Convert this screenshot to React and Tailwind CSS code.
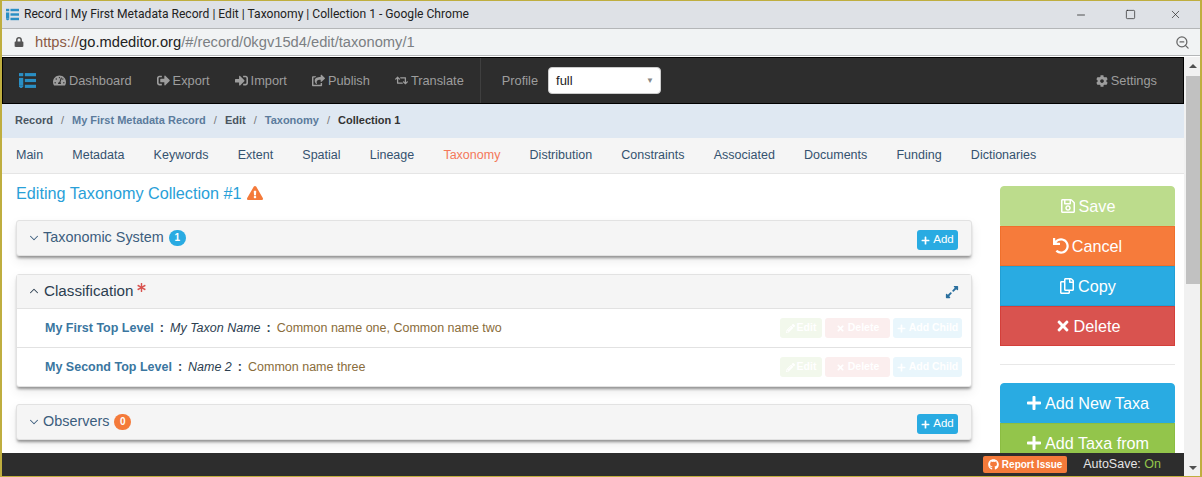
import React from 'react';
import {
    FaTachometerAlt, FaSignOutAlt, FaSignInAlt, FaShareSquare, FaRetweet, FaCog, FaRegSave, FaUndo,
    FaRegCopy, FaTimes, FaPlus, FaPencilAlt, FaExpandAlt, FaExclamationTriangle, FaGithub, FaAsterisk, FaLock,
} from 'react-icons/fa';
import { ChevronDown, ChevronUp, ZoomOut, Minus, Square, X } from 'lucide-react';

const navItems = [
    { label: 'Dashboard', icon: FaTachometerAlt },
    { label: 'Export', icon: FaSignOutAlt },
    { label: 'Import', icon: FaSignInAlt },
    { label: 'Publish', icon: FaShareSquare },
    { label: 'Translate', icon: FaRetweet },
];

const tabs = ['Main', 'Metadata', 'Keywords', 'Extent', 'Spatial', 'Lineage', 'Taxonomy', 'Distribution', 'Constraints', 'Associated', 'Documents', 'Funding', 'Dictionaries'];

const Logo = ({ className }) => (
    <svg viewBox="0 0 16 16" className={className} fill="currentColor">
        <rect x="0" y="1" width="4" height="3" />
        <rect x="0" y="5.5" width="4" height="7" />
        <path d="M0 12.5h4v1.2L2.7 15H1.3L0 13.7z" />
        <rect x="5.5" y="1" width="10.5" height="3" />
        <rect x="5.5" y="6.5" width="10.5" height="3" />
        <rect x="5.5" y="12" width="10.5" height="3" />
    </svg>
);

const AddButton = () => (
    <button className="mt-[4px] flex h-[20px] w-[41px] items-center justify-center gap-[3px] rounded-[3px] bg-[#29abe2] text-[11.5px] text-white">
        <FaPlus size={9} />Add
    </button>
);

const Panel = ({ title, badge, badgeColor }) => (
    <div className="flex h-[36px] items-center justify-between rounded-[3px] border border-[#e2e2e2] bg-[#f5f5f5] pl-[10px] pr-[13px] shadow-[0_3px_3px_-1px_rgba(0,0,0,0.4),0_5px_12px_rgba(0,0,0,0.08)]">
        <div className="flex items-center text-[14.4px] text-[#3c5d7d]">
            <ChevronDown size={14} strokeWidth={1.75} className="mr-[2px]" />
            {title}
            <span className={`ml-[5px] flex h-[16px] min-w-[17px] items-center justify-center rounded-full text-[10px] font-bold text-white ${badgeColor}`}>{badge}</span>
        </div>
        <AddButton />
    </div>
);

const TaxonRow = ({ level, name, common, last }) => (
    <div className={`flex items-center justify-between pl-[28px] pr-[9px] ${last ? 'h-[38px]' : 'h-[39px] border-b border-[#e2e2e2]'}`}>
        <div className="text-[12.5px] text-[#8a6d3b]">
            <span className="font-bold text-[#3a76a0]">{level}</span>
            <b className="mx-[6px] text-[#2c3e50]">:</b>
            <i className="text-[#2c3e50]">{name}</i>
            <b className="mx-[6px] text-[#2c3e50]">:</b>
            {common}
        </div>
        <div className="flex items-center gap-[3px] text-[10.5px] font-bold text-white">
            <span className="flex h-[20px] w-[42px] items-center justify-center gap-[2px] rounded-[3px] bg-[#f2f8ec]"><FaPencilAlt size={9} />Edit</span>
            <span className="flex h-[20px] w-[65px] items-center justify-center gap-[3px] rounded-[3px] bg-[#fbeeee]"><FaTimes size={9} />Delete</span>
            <span className="flex h-[20px] w-[69px] items-center justify-center gap-[3px] rounded-[3px] bg-[#e9f6fc]"><FaPlus size={9} />Add Child</span>
        </div>
    </div>
);

const SideButton = ({ icon: Icon, label, color, rounded }) => (
    <button className={`flex h-[40px] w-full shrink-0 items-center justify-center gap-[3px] border text-[16.2px] text-white ${color} ${rounded ? 'rounded-t-[4px]' : ''}`}>
        <Icon size={16} />{label}
    </button>
);

export default function App() {
    return (
        <div className="flex h-[477px] w-[1202px] flex-col overflow-hidden border-y border-r-2 border-l-2 border-[#bfae3f] bg-white font-['Liberation_Sans',sans-serif]">
            {/* Chrome window */}
            <div className="flex h-[28px] shrink-0 items-center justify-between border-b border-[#b4b6b8] bg-[#dee1e6] pl-[4px] pr-[18px]">
                <div className="flex items-center gap-[5px] font-['Roboto',sans-serif] text-[12.1px] text-[#222]">
                    <Logo className="h-[13px] w-[13px] text-[#2a8fc4]" />
                    Record | My First Metadata Record | Edit | Taxonomy | Collection 1 - Google Chrome
                </div>
                <div className="flex items-center text-[#222]">
                    <Minus size={12} strokeWidth={1.5} />
                    <Square size={11} strokeWidth={1.5} className="ml-[38px]" />
                    <X size={13} strokeWidth={1.25} className="ml-[33px]" />
                </div>
            </div>
            <div className="flex h-[27px] shrink-0 items-center justify-between border-b border-[#b4b6b8] bg-[#f1f3f4] pl-[12px] pr-[10px]">
                <div className="flex items-center text-[14.7px] text-[#7b7f83]">
                    <FaLock size={10} className="mr-[11px] text-[#555]" />
                    <span className="text-[#8a5a44]">https://</span>
                    <span className="text-[#222]">go.mdeditor.org</span>
                    /#/record/0kgv15d4/edit/taxonomy/1
                </div>
                <ZoomOut size={15} className="text-[#666]" />
            </div>

            <div className="flex min-h-0 flex-1 pt-px">
                <div className="flex min-w-0 flex-1 flex-col">
                    {/* Top nav */}
                    <div className="flex h-[47px] shrink-0 items-center border border-black bg-[#2d2d2d] text-[12.8px] text-[#9d9d9d]">
                        <Logo className="ml-[16px] mr-[17px] h-[17px] w-[17px] text-[#2a8fc4]" />
                        {navItems.map(({ label, icon: Icon }) => (
                            <span key={label} className="mr-[25px] flex items-center gap-[3px]"><Icon size={13} />{label}</span>
                        ))}
                        <div className="ml-[-9px] mr-[21px] h-full border-l border-[#3f3f3f]" />
                        <span className="mr-[10px]">Profile</span>
                        <div className="flex h-[27px] w-[113px] items-center justify-between rounded-[4px] border border-[#ccc] bg-white pl-[7px] pr-[6px] text-[13px] text-[#222]">
                            full
                            <span className="text-[8px] text-[#888]">▼</span>
                        </div>
                        <span className="ml-auto mr-[26px] flex items-center gap-[3px]"><FaCog size={12} />Settings</span>
                    </div>

                    <div className="flex h-[34px] shrink-0 items-center bg-[#dfe8f2] pb-[2px] pl-[13px] text-[11px] font-bold text-[#4a5560]">
                        Record<span className="mx-[8px] font-normal text-[#777]">/</span>
                        <span className="text-[#5b7b9c]">My First Metadata Record</span><span className="mx-[8px] font-normal text-[#777]">/</span>
                        Edit<span className="mx-[8px] font-normal text-[#777]">/</span>
                        <span className="text-[#5b7b9c]">Taxonomy</span><span className="mx-[8px] font-normal text-[#777]">/</span>
                        <span className="text-[#333]">Collection 1</span>
                    </div>

                    <div className="flex h-[36px] shrink-0 items-center gap-[29.2px] border-b border-[#e5e5e5] bg-[#f5f5f5] pl-[14px] text-[12.5px] text-[#34526f]">
                        {tabs.map(t => (
                            <span key={t} className={t === 'Taxonomy' ? 'text-[#f4785a]' : ''}>{t}</span>
                        ))}
                    </div>

                    <div className="flex min-h-0 flex-1 overflow-hidden">
                        <div className="w-[998px] shrink-0 pl-[14px] pr-[28px]">
                            <h1 className="mt-[8px] flex h-[22px] items-center gap-[5px] text-[16.2px] font-normal text-[#29a0d8]">
                                Editing Taxonomy Collection #1
                                <FaExclamationTriangle size={16} className="text-[#f47a3a]" />
                            </h1>
                            <div className="mt-[16px]">
                                <Panel title="Taxonomic System" badge="1" badgeColor="bg-[#29abe2]" />
                            </div>
                            <div className="mt-[18px] rounded-[3px] border border-[#e2e2e2] bg-white shadow-[0_3px_3px_-1px_rgba(0,0,0,0.4),0_5px_12px_rgba(0,0,0,0.08)]">
                                <div className="flex h-[34px] items-center justify-between border-b border-[#e2e2e2] bg-[#f5f5f5] pl-[10px] pr-[12px]">
                                    <div className="flex items-center text-[15.2px] text-[#2c3e50]">
                                        <ChevronUp size={14} strokeWidth={1.75} className="mr-[3px]" />
                                        Classification
                                        <FaAsterisk size={9} className="mb-[7px] ml-[4px] text-[#d9534f]" />
                                    </div>
                                    <FaExpandAlt size={14} className="text-[#2a6f9e]" />
                                </div>
                                <TaxonRow level="My First Top Level" name="My Taxon Name" common="Common name one, Common name two" />
                                <TaxonRow level="My Second Top Level" name="Name 2" common="Common name three" last />
                            </div>
                            <div className="mt-[17px]">
                                <Panel title="Observers" badge="0" badgeColor="bg-[#f47a3a]" />
                            </div>
                        </div>
                        <div className="flex w-[175px] shrink-0 flex-col pt-[12px]">
                            <SideButton icon={FaRegSave} label="Save" color="bg-[#bcdc8c] border-[#bcdc8c]" rounded />
                            <SideButton icon={FaUndo} label="Cancel" color="bg-[#f67b3b] border-[#f0702c]" />
                            <SideButton icon={FaRegCopy} label="Copy" color="bg-[#29abe2] border-[#229fd4]" />
                            <SideButton icon={FaTimes} label="Delete" color="bg-[#d9534f] border-[#d43f3a]" />
                            <div className="my-[18px] shrink-0 border-t border-[#e8e8e8]" />
                            <SideButton icon={FaPlus} label="Add New Taxa" color="bg-[#29abe2] border-[#29abe2]" rounded />
                            <SideButton icon={FaPlus} label="Add Taxa from" color="bg-[#93c54b] border-[#8bbd42]" />
                        </div>
                    </div>

                    <div className="flex h-[23px] shrink-0 items-center justify-end bg-[#2d2d2d] pr-[23px] text-[12.5px]">
                        <span className="mr-[16px] flex h-[17px] w-[84px] items-center justify-center gap-[3px] rounded-[2px] bg-[#f47a3a] text-[10px] font-bold text-white"><FaGithub size={11} />Report Issue</span>
                        <span className="text-[#e5e5e5]">AutoSave:&nbsp;<span className="text-[#93c54b]">On</span></span>
                    </div>
                </div>

                {/* Scrollbar */}
                <div className="flex w-[16px] shrink-0 flex-col items-center bg-[#f1f1f1] pl-[2px]">
                    <div className="mt-[7px] h-0 w-0 border-x-[4px] border-b-[4px] border-x-transparent border-b-[#505050]" />
                    <div className="mt-[8px] h-[208px] w-full bg-[#c1c1c1]" />
                    <div className="mb-[6px] mt-auto h-0 w-0 border-x-[4px] border-t-[4px] border-x-transparent border-t-[#505050]" />
                </div>
            </div>
        </div>
    );
}
